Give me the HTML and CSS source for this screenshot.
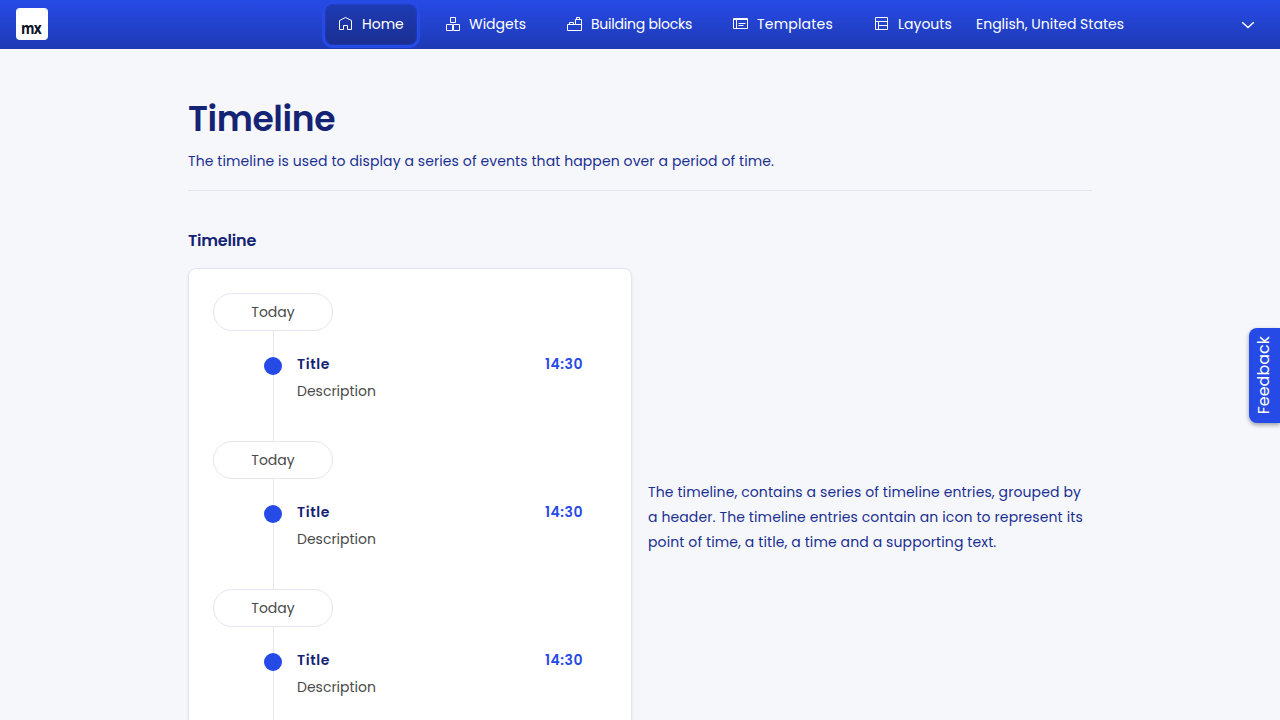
FILE: index.html
```html
<!DOCTYPE html>
<html lang="en">
<head>
<meta charset="utf-8">
<title>Timeline</title>
<link rel="stylesheet" href="styles.css">
</head>
<body>
<header class="topbar">
  <div class="logo"><span class="logo-text">mx</span></div>
  <nav class="nav">
    <a class="nav-item nav-home active"><svg class="icon" viewBox="0 0 16 16"><path d="M2.500 4.500 8.500 1.500 14.500 4.500V13.500H10.500V9.500H6.500V13.500H2.500Z"/></svg><span>Home</span></a>
    <a class="nav-item nav-widgets"><svg class="icon" viewBox="0 0 16 16"><path d="M5.500 1.500h5v5h-5zM1.500 8.500h6v6h-6zM8.500 8.500h6v6h-6z"/></svg><span>Widgets</span></a>
    <a class="nav-item nav-blocks"><svg class="icon" viewBox="0 0 16 16"><path d="M1.500 14.500v-6h8v-5h6v11zM9.500 8.500h6M3.500 8.500v-2h4v2M10.500 3.500v-2h3v2"/></svg><span class="t-blocks">Building blocks</span></a>
    <a class="nav-item nav-templates"><svg class="icon" viewBox="0 0 16 16"><path d="M1.500 2.500h14v10h-14zM1.500 3.500h14M4.500 4v8.500M6.500 7.500h7M6.500 9.500h5"/></svg><span class="t-templates">Templates</span></a>
    <a class="nav-item nav-layouts"><svg class="icon" viewBox="0 0 16 16"><path d="M2.500 1.500h12v12h-12zM2.500 5.500h12M5.500 5.500v8M5.500 9.500h9"/></svg><span>Layouts</span></a>
  </nav>
  <div class="language"><span>English, United States</span>
    <svg class="chevron" viewBox="0 0 14 8"><path d="M1.200 1.200 7 6.600 12.800 1.200"/></svg>
  </div>
</header>
<main class="page">
  <div class="page-header">
    <h1 class="page-title">Timeline</h1>
    <p class="subtitle">The timeline is used to display a series of events that happen over a period of time.</p>
  </div>
  <h2 class="section-title">Timeline</h2>
  <div class="columns">
    <section class="card">
      <div class="group">
        <div class="day">Today</div>
        <div class="entry"><div class="rail"><span class="dot"></span></div>
          <div class="info"><div class="title">Title</div><div class="description">Description</div></div><div class="time">14:30</div></div>
      </div>
      <div class="group">
        <div class="day">Today</div>
        <div class="entry"><div class="rail"><span class="dot"></span></div>
          <div class="info"><div class="title">Title</div><div class="description">Description</div></div><div class="time">14:30</div></div>
      </div>
      <div class="group">
        <div class="day">Today</div>
        <div class="entry"><div class="rail"><span class="dot"></span></div>
          <div class="info"><div class="title">Title</div><div class="description">Description</div></div><div class="time">14:30</div></div>
      </div>
    </section>
    <p class="about">The timeline, contains a series of timeline entries, grouped by<br>a header. The timeline entries contain an icon to represent its<br>point of time, a title, a time and a supporting text.</p>
  </div>
</main>
<button class="feedback"><span class="t-feedback">Feedback</span></button>
</body>
</html>
```
FILE: styles.css
```css
* { box-sizing: border-box; }
body {
  margin: 0;
  height: 720px;
  overflow: hidden;
  background: #f6f7fb;
  font-family: Poppins, Inter, "Open Sans", sans-serif;
  font-size: 14px;
  color: #4a4a4a;
}
h1, h2, p { margin: 0; }
.topbar {
  display: flex;
  height: 49px;
  padding-left: 16px;
  background: linear-gradient(#264ae5, #1f3ab5);
  color: #fff;
}
.logo {
  width: 32px;
  height: 32px;
  margin-top: 8px;
  margin-right: 277px;
  border-radius: 4px;
  background: #fff;
  color: #0a1325;
  padding: 10px 0 0 5px;
}
.logo-text {
  display: block;
  font: 700 16px/20px "Open Sans", sans-serif;
  letter-spacing: -.8px;
  transform: scaleX(.86);
  transform-origin: left;
}
.nav {
  display: flex;
  gap: 16px;
  padding-top: 4px;
}
.nav-item {
  display: flex;
  align-items: center;
  height: 41px;
  padding-left: 12px;
  border-radius: 8px;
  white-space: nowrap;
}
.nav-home { width: 92px; }
.nav-widgets { width: 105px; }
.nav-blocks { width: 150px; }
.nav-templates { width: 125px; }
.nav-layouts { width: 103px; }
.active {
  background: linear-gradient(#1e3bb5, #1a2f92);
  box-shadow: 0 0 0 3px #264ae5, inset 0 0 2px #264ae5;
}
.icon {
  width: 16px;
  height: 16px;
  margin-right: 9px;
  flex: none;
  fill: none;
  stroke: #fff;
  stroke-width: 1;
  position: relative;
  top: -.5px;
}
.nav-widgets .icon { margin-right: 8px; }
.t-blocks { letter-spacing: -.22px; }
.t-templates { letter-spacing: .2px; }
.language {
  display: flex;
  align-items: center;
  justify-content: space-between;
  flex: 1;
  padding: 0 25px 0 12px;
  white-space: nowrap;
}
.chevron {
  width: 14px;
  height: 8px;
  margin-top: 1px;
  fill: none;
  stroke: #fff;
  stroke-width: 1.500;
}
.page {
  width: 904px;
  margin: 0 auto;
  padding-top: 47px;
}
.page-header {
  height: 95px;
  border-bottom: 1px solid #e3e4f1;
}
.page-title {
  font-size: 34.500px;
  line-height: 46px;
  font-weight: 600;
  letter-spacing: -.4px;
  color: #142374;
}
.subtitle {
  margin-top: 7px;
  line-height: 24px;
  letter-spacing: .092px;
  color: #1a2f92;
  white-space: nowrap;
}
.section-title {
  margin: 38px 0 15px;
  font-size: 16px;
  line-height: 24px;
  font-weight: 600;
  letter-spacing: -.2px;
  color: #142374;
}
.columns {
  display: grid;
  grid-template-columns: 444px 444px;
  column-gap: 16px;
  align-items: center;
}
.card {
  height: 498px;
  padding: 24px;
  border: 1px solid #e3e4f1;
  border-radius: 8px;
  background: #fff;
  box-shadow: 0 2px 4px rgba(10, 19, 37, .06);
}
.group { height: 148px; }
.day {
  width: 120px;
  height: 38px;
  border: 1px solid #e6e5f2;
  border-radius: 19px;
  text-align: center;
  line-height: 36px;
}
.entry { display: flex; height: 110px; }
.rail {
  width: 18px;
  margin-left: 51px;
  padding-top: 26px;
  background: linear-gradient(#e6e5f2, #e6e5f2) 9px 0 / 1px 100% no-repeat;
}
.dot {
  display: block;
  width: 18px;
  height: 18px;
  border-radius: 50%;
  background: #264ae5;
}
.info { flex: 1; padding: 21px 0 0 15px; }
.title { line-height: 24px; font-weight: 600; letter-spacing: .6px; color: #142374; }
.description { margin-top: 3px; line-height: 24px; }
.time {
  width: 62px;
  padding-top: 21px;
  line-height: 24px;
  font-weight: 600;
  letter-spacing: .5px;
  color: #264ae5;
}
.about { line-height: 25px; letter-spacing: .11px; color: #1a2f92; white-space: nowrap; }
.feedback {
  position: absolute;
  right: 0;
  top: 328px;
  width: 31px;
  height: 95px;
  padding: 0;
  border: 0;
  border-radius: 8px 0 0 8px;
  background: #264ae5;
  color: #fff;
  box-shadow: 0 2px 4px rgba(10, 19, 37, .4);
  font: 16px/31px Poppins, Inter, sans-serif;
}
.t-feedback {
  display: block;
  width: 30px;
  line-height: 30px;
  writing-mode: vertical-rl;
  transform: rotate(180deg);
}
```
